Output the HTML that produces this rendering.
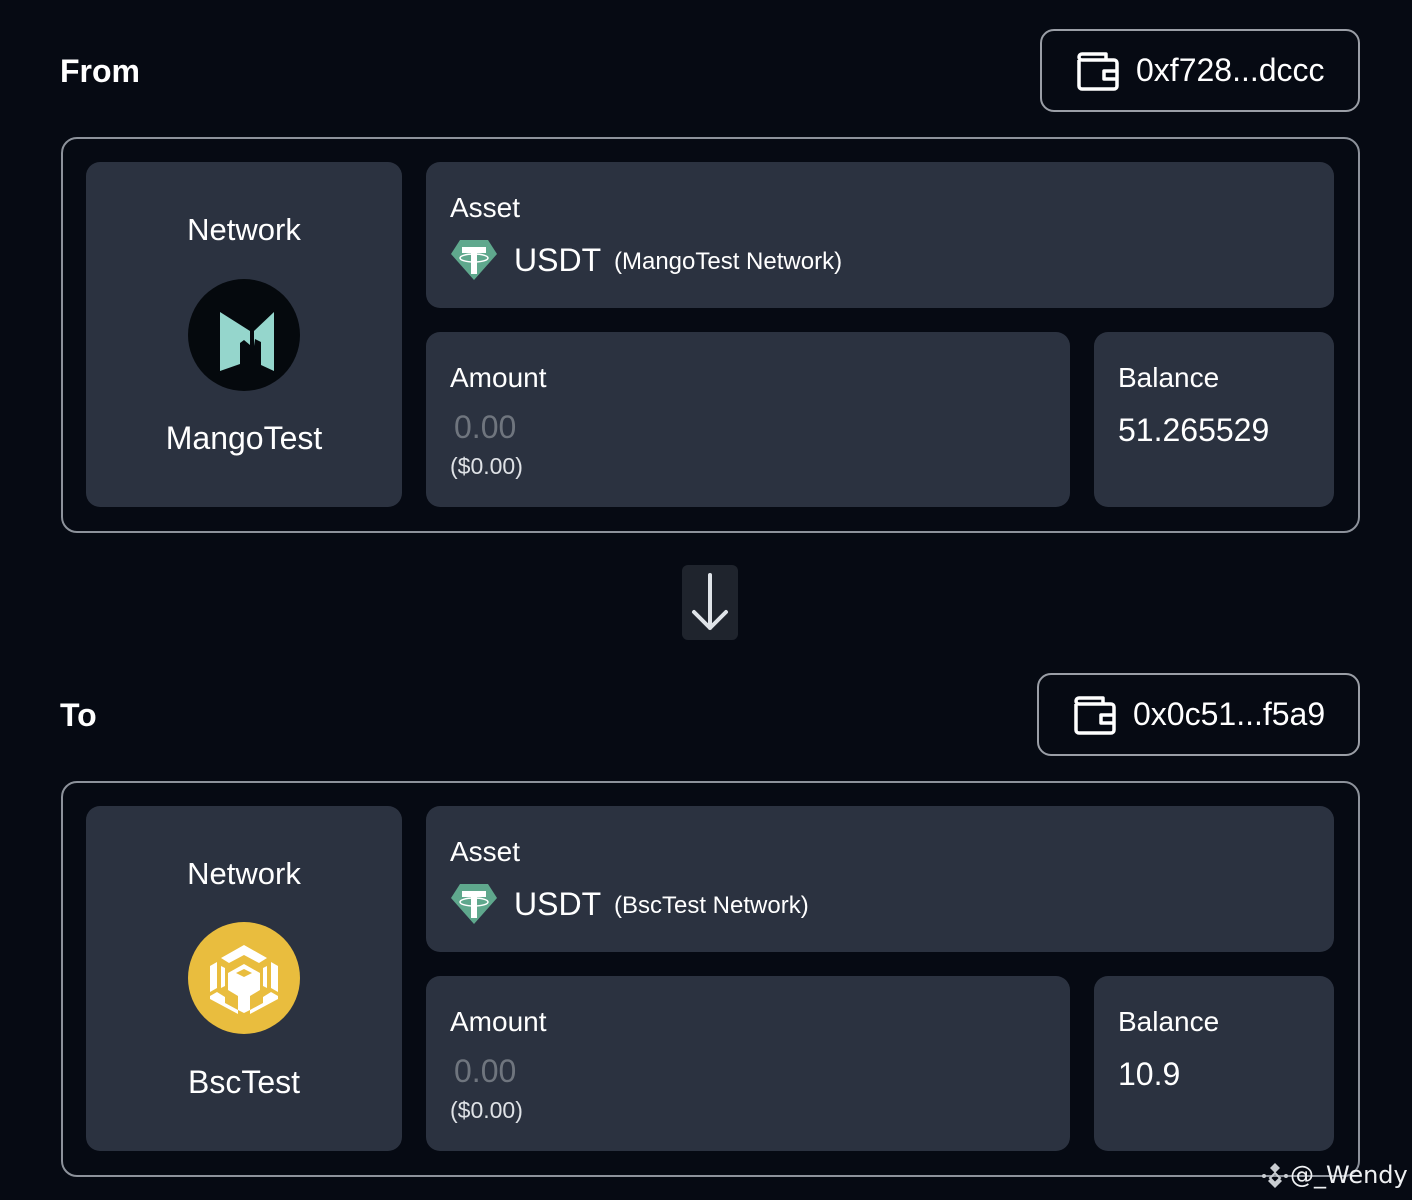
<!DOCTYPE html>
<html><head><meta charset="utf-8"><style>
*{margin:0;padding:0;box-sizing:border-box}
body{width:1412px;height:1200px;background:#060a13;font-family:"Liberation Sans",Arial,sans-serif;color:#fff;position:relative;overflow:hidden}
.a{position:absolute}
.lbl{font-weight:bold;font-size:32px}
.wb{border:2px solid #9a9ea6;border-radius:14px;display:flex;align-items:center}
.wb span{font-size:32px;margin-left:16px}
.box{border:2px solid #8d929b;border-radius:16px}
.card{background:#2b3240;border-radius:14px}
.t26{font-size:28px}
.gray{color:#6f757e}
</style></head><body>

<div class="a lbl" style="left:60px;top:53px">From</div>
<div class="a wb" style="left:1040px;top:29px;width:320px;height:83px;padding-left:34px">
<svg width="44" height="42" viewBox="0 0 44 42" fill="none" stroke="#fff" stroke-width="3.5" stroke-linejoin="round"><path d="M3 10V36a3 3 0 0 0 3 3H38a3 3 0 0 0 3-3V13a3 3 0 0 0-3-3H6a3 3 0 0 1 0-6H30v6"/><path d="M41 21H28v8h13"/></svg>
<span>0xf728...dccc</span></div>

<div class="a box" style="left:61px;top:137px;width:1299px;height:396px"></div>
<div class="a card" style="left:86px;top:162px;width:316px;height:345px"></div>
<div class="a t26" style="left:86px;top:212px;width:316px;text-align:center;font-size:31px">Network</div>
<svg class="a" style="left:188px;top:279px" width="112" height="112" viewBox="0 0 112 112"><circle cx="56" cy="56" r="56" fill="#05090d"/><path d="M32 33L62 52V66L56 61L52 64V85L32 92Z" fill="#95d6cc"/><path d="M86 33V92L73 86V63L67 60L66 67V52Z" fill="#95d6cc"/></svg>
<div class="a" style="left:86px;top:420px;width:316px;text-align:center;font-size:32px">MangoTest</div>

<div class="a card" style="left:426px;top:162px;width:908px;height:146px"></div>
<div class="a t26" style="left:450px;top:192px">Asset</div>
<svg class="a" style="left:450px;top:238px" width="48" height="44" viewBox="0 0 48 44"><path d="M10 2H38L47 16L24 42L1 16Z" fill="#5fa88d"/><rect x="12" y="9" width="24" height="6" fill="#fff"/><rect x="21" y="9" width="6" height="27" fill="#fff"/><ellipse cx="24" cy="20" rx="14" ry="4" fill="none" stroke="#fff" stroke-width="1.5"/></svg>
<div class="a" style="left:514px;top:242px;font-size:32px">USDT</div>
<div class="a" style="left:614px;top:248px;font-size:24px">(MangoTest Network)</div>

<div class="a card" style="left:426px;top:332px;width:644px;height:175px"></div>
<div class="a t26" style="left:450px;top:362px">Amount</div>
<div class="a gray" style="left:454px;top:409px;font-size:32px">0.00</div>
<div class="a" style="left:450px;top:453px;font-size:23px;color:#dfe2e6">($0.00)</div>
<div class="a card" style="left:1094px;top:332px;width:240px;height:175px"></div>
<div class="a t26" style="left:1118px;top:362px">Balance</div>
<div class="a" style="left:1118px;top:412px;font-size:32px">51.265529</div>

<div class="a" style="left:682px;top:565px;width:56px;height:75px;background:#1f242d;border-radius:6px"></div>
<svg class="a" style="left:682px;top:565px" width="56" height="75" viewBox="0 0 56 75" fill="none" stroke="#dfe3e8" stroke-width="4" stroke-linecap="round" stroke-linejoin="round"><path d="M28 10V63M12 47L28 63L44 47"/></svg>

<div class="a lbl" style="left:60px;top:697px">To</div>
<div class="a wb" style="left:1037px;top:673px;width:323px;height:83px;padding-left:34px">
<svg width="44" height="42" viewBox="0 0 44 42" fill="none" stroke="#fff" stroke-width="3.5" stroke-linejoin="round"><path d="M3 10V36a3 3 0 0 0 3 3H38a3 3 0 0 0 3-3V13a3 3 0 0 0-3-3H6a3 3 0 0 1 0-6H30v6"/><path d="M41 21H28v8h13"/></svg>
<span>0x0c51...f5a9</span></div>

<div class="a box" style="left:61px;top:781px;width:1299px;height:396px"></div>
<div class="a card" style="left:86px;top:806px;width:316px;height:345px"></div>
<div class="a" style="left:86px;top:856px;width:316px;text-align:center;font-size:31px">Network</div>
<svg class="a" style="left:188px;top:922px" width="112" height="112" viewBox="0 0 112 112"><circle cx="56" cy="56" r="56" fill="#e9bd3e"/><g fill="#fff">
<path d="M56 23L79 36L71 41L56 33L41 41L33 36Z"/>
<path d="M56 42L72 51V68L62 74V88L56 91L50 88V74L40 68V51Z"/>
<path d="M22 44L29 40V66L22 70Z"/><path d="M90 44L83 40V66L90 70Z"/>
<path d="M22 74L29 70L37 75V81L50 88V92L22 77Z"/><path d="M90 74L83 70L75 75V81L62 88V92L90 77Z"/>
<path d="M33 44L37 46V64L33 66Z"/><path d="M79 44L75 46V64L79 66Z"/>
</g><path d="M56 47L64 51L56 55L48 51Z" fill="#e9bd3e"/></svg>
<div class="a" style="left:86px;top:1064px;width:316px;text-align:center;font-size:32px">BscTest</div>

<div class="a card" style="left:426px;top:806px;width:908px;height:146px"></div>
<div class="a t26" style="left:450px;top:836px">Asset</div>
<svg class="a" style="left:450px;top:882px" width="48" height="44" viewBox="0 0 48 44"><path d="M10 2H38L47 16L24 42L1 16Z" fill="#5fa88d"/><rect x="12" y="9" width="24" height="6" fill="#fff"/><rect x="21" y="9" width="6" height="27" fill="#fff"/><ellipse cx="24" cy="20" rx="14" ry="4" fill="none" stroke="#fff" stroke-width="1.5"/></svg>
<div class="a" style="left:514px;top:886px;font-size:32px">USDT</div>
<div class="a" style="left:614px;top:892px;font-size:24px">(BscTest Network)</div>

<div class="a card" style="left:426px;top:976px;width:644px;height:175px"></div>
<div class="a t26" style="left:450px;top:1006px">Amount</div>
<div class="a gray" style="left:454px;top:1053px;font-size:32px">0.00</div>
<div class="a" style="left:450px;top:1097px;font-size:23px;color:#dfe2e6">($0.00)</div>
<div class="a card" style="left:1094px;top:976px;width:240px;height:175px"></div>
<div class="a t26" style="left:1118px;top:1006px">Balance</div>
<div class="a" style="left:1118px;top:1056px;font-size:32px">10.9</div>

<svg class="a" style="left:1260px;top:1161px" width="30" height="30" viewBox="0 0 30 30" fill="#c9cdd2"><path d="M15 2L20 7L15 12L10 7Z"/><path d="M15 12L20 17L15 22L10 17Z" fill="none" stroke="#c9cdd2" stroke-width="2"/><circle cx="4" cy="15" r="2"/><circle cx="26" cy="15" r="2"/><path d="M8 20L15 27L22 20L20 18L15 23L10 18Z"/></svg>
<div class="a" style="left:1290px;top:1161px;font-size:24px;font-family:'DejaVu Sans',sans-serif;color:#eef0f2">@_Wendy</div>
</body></html>
